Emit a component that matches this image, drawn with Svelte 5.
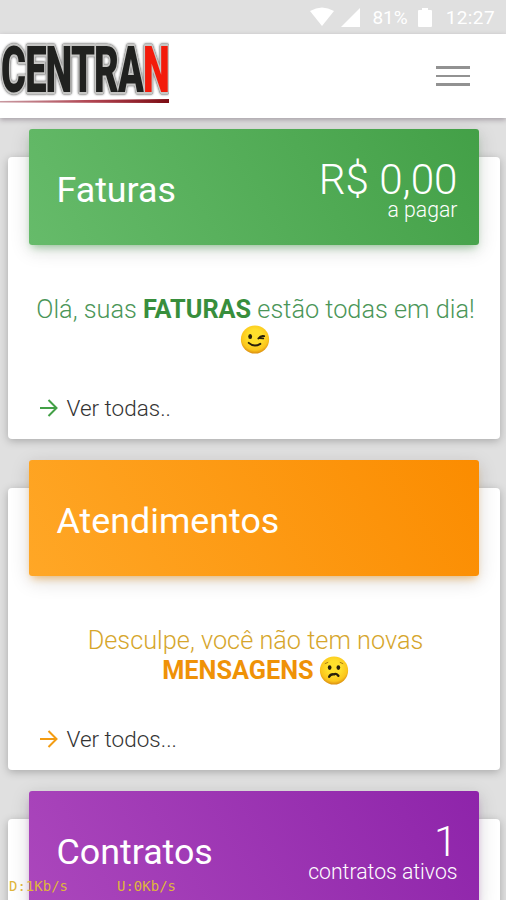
<script>
  const cards = [
    {
      title: 'Faturas',
      color: 'green',
      value: 'R$ 0,00',
      label: 'a pagar',
      before: 'Olá, suas ',
      strong: 'FATURAS',
      after: ' estão todas em dia! ',
      emoji: 'wink',
      link: 'Ver todas..'
    },
    {
      title: 'Atendimentos',
      color: 'orange',
      before: 'Desculpe, você não tem novas ',
      strong: 'MENSAGENS',
      after: ' ',
      emoji: 'sad',
      link: 'Ver todos...'
    },
    {
      title: 'Contratos',
      color: 'purple',
      value: '1',
      label: 'contratos ativos'
    }
  ];
</script>

<div class="screen">
  <div class="status">
    <svg class="wifi" width="26" height="20" viewBox="0 0 26 20"><path d="M1 4Q13-3 25 4L13 19Z" /></svg>
    <svg class="signal" width="19" height="19" viewBox="0 0 19 19"><path d="M0 19L19 0V19Z" /></svg>
    <span class="percent">81%</span>
    <svg class="battery" width="14" height="19" viewBox="0 0 14 19"><path d="M1 2H4V0H10V2H13Q14 2 14 3V18Q14 19 13 19H1Q0 19 0 18V3Q0 2 1 2Z" /></svg>
    <span class="time">12:27</span>
  </div>

  <nav class="navbar">
    <svg class="logo" width="169" height="78" viewBox="0 0 169 78">
      <defs>
        <linearGradient id="line">
          <stop offset="0" stop-color="#c99aa2" />
          <stop offset=".55" stop-color="#b04350" />
          <stop offset="1" stop-color="#7c0c14" />
        </linearGradient>
      </defs>
      <text class="letters" x="1" y="58" textLength="168" lengthAdjust="spacingAndGlyphs">CENTRA<tspan class="red">N</tspan></text>
      <path d="M0 67L169 65V69L0 68.5Z" fill="url(#line)" />
    </svg>
    <button class="toggler" aria-label="Menu">
      <span></span>
      <span></span>
      <span></span>
    </button>
  </nav>

  <main>
    {#each cards as card}
      <div class="card {card.color}">
        <div class="card-header">
          <h2>{card.title}</h2>
          {#if card.value}
            <div class="total">
              <p class="value">{card.value}</p>
              <p class="label">{card.label}</p>
            </div>
          {/if}
        </div>
        {#if card.strong}
          <p class="message">
            {card.before}<strong>{card.strong}</strong>{card.after}<svg class="emoji" viewBox="0 0 30 30">
              <defs>
                <radialGradient id={card.emoji} cx=".5" cy=".4" r=".6">
                  <stop offset=".4" stop-color="#ffe02c" />
                  <stop offset=".8" stop-color="#fbc51c" />
                  <stop offset="1" stop-color="#d98c10" />
                </radialGradient>
              </defs>
              <circle cx="15" cy="15" r="14.6" fill="url(#{card.emoji})" />
              {#if card.emoji == 'wink'}
                <ellipse cx="10" cy="12" rx="2" ry="2.6" fill="#29200c" />
                <path d="M18.500 14Q21 10.500 24.500 11.500M19.500 13.500L23.500 13.800" class="stroke" />
                <path d="M8.500 18.500Q14 23.500 20.500 19.500" class="stroke" />
              {:else}
                <ellipse cx="10.500" cy="12" rx="1.900" ry="2.500" fill="#29200c" />
                <ellipse cx="19.500" cy="12" rx="1.900" ry="2.500" fill="#29200c" />
                <path d="M5.500 8L9 6.500M24.500 8L21 6.500" stroke="#a87610" stroke-width="1" />
                <path d="M10 21.500Q11.500 18.500 15 19Q17 17.500 19.500 20.500" class="stroke frown" />
              {/if}
            </svg>
          </p>
          <a class="more" href="#todos">
            <svg width="18" height="18" viewBox="0 0 18 18"><path d="M0 9H16.500M8.500 1L16.500 9L8.500 17" /></svg>
            <span>{card.link}</span>
          </a>
        {/if}
      </div>
    {/each}
  </main>

  <div class="speed">
    <span>D:1Kb/s</span>
    <span>U:0Kb/s</span>
  </div>
</div>

<style>
  :global(body) {
    background: #e0e0e0;
  }

  .screen {
    position: relative;
    width: 506px;
    height: 900px;
    overflow: hidden;
    background: #e0e0e0;
    font-family: Roboto, sans-serif;
    font-weight: 300;
  }

  h2,
  p {
    margin: 0;
  }

  .status {
    display: flex;
    align-items: center;
    justify-content: flex-end;
    box-sizing: border-box;
    height: 34px;
    padding: 1px 11px 0 0;
    color: #fff;
    font-size: 19px;
    font-weight: 400;
  }

  .status svg {
    fill: #fff;
  }

  .wifi {
    margin-top: -1px;
  }

  .signal {
    margin: 0 12px 0 6px;
  }

  .battery {
    margin: 0 14px 0 10px;
  }

  .time {
    letter-spacing: .4px;
  }

  .navbar {
    position: relative;
    display: flex;
    align-items: flex-start;
    justify-content: space-between;
    height: 84px;
    background: #fff;
    box-shadow: 0 2px 5px rgba(60, 40, 60, .35);
  }

  /* silver letter outline with a darker rim around it */
  .letters {
    fill: #20211f;
    stroke: #c6c6c4;
    stroke-width: 4.500px;
    stroke-linejoin: round;
    paint-order: stroke;
    font-size: 64.500px;
    font-weight: 900;
    letter-spacing: -1.500px;
    filter: drop-shadow(0 0 .6px #777) drop-shadow(0 0 .8px #777);
  }

  .red {
    fill: #f31b0b;
  }

  .toggler {
    display: flex;
    flex-direction: column;
    gap: 6px;
    margin: 32px 36px 0 0;
    padding: 0;
    border: 0;
    background: none;
  }

  .toggler span {
    width: 34px;
    height: 2.500px;
    background: #929292;
  }

  main {
    padding: 38.500px 6.500px 0 7.500px;
  }

  .card {
    display: flow-root;
    box-sizing: border-box;
    height: 282px;
    margin-bottom: 49px;
    border-radius: 4px;
    background: #fff;
    box-shadow: 0 2px 8px rgba(0, 0, 0, .25);
  }

  .card-header {
    display: flex;
    align-items: center;
    justify-content: space-between;
    box-sizing: border-box;
    height: 116px;
    margin: -28px 21px 0;
    padding: 0 21px 0 28px;
    border-radius: 3px;
    color: #fff;
  }

  .green .card-header {
    background: linear-gradient(60deg, #66bb6a, #43a047);
    box-shadow: 0 5px 20px rgba(0, 0, 0, .14), 0 5px 8px -3px rgba(76, 175, 80, .5);
  }

  .orange .card-header {
    background: linear-gradient(60deg, #ffa726, #fb8c00);
    box-shadow: 0 5px 20px rgba(0, 0, 0, .14), 0 5px 8px -3px rgba(255, 152, 0, .5);
  }

  .purple .card-header {
    background: linear-gradient(60deg, #ab47bc, #8e24aa);
    box-shadow: 0 5px 20px rgba(0, 0, 0, .14), 0 5px 8px -3px rgba(156, 39, 176, .5);
  }

  h2 {
    padding-top: 7px;
    font-size: 35.800px;
    font-weight: 400;
  }

  .total {
    padding-top: 8px;
    text-align: right;
  }

  .value {
    font-size: 42.200px;
    line-height: 39px;
  }

  .label {
    font-size: 21.200px;
    line-height: 22px;
  }

  .message {
    height: 60px;
    margin: 50px 8px 0 12px;
    font-size: 25.300px;
    line-height: 30px;
    text-align: center;
  }

  .green .message {
    color: #4b9658;
  }

  .green strong {
    color: #388e3c;
  }

  .orange .message {
    color: #d6a62c;
  }

  .orange strong {
    color: #ef9207;
  }

  strong {
    font-weight: 700;
  }

  .emoji {
    width: 30px;
    height: 29px;
    margin-left: -1px;
    vertical-align: -6px;
  }

  .stroke {
    fill: none;
    stroke: #29200c;
    stroke-width: 2;
    stroke-linecap: round;
  }

  .frown {
    stroke-width: 2.500;
  }

  .more {
    display: flex;
    align-items: center;
    gap: 9px;
    margin: 39px 0 0 32px;
    color: #333;
    font-size: 22.500px;
    line-height: 28px;
    text-decoration: none;
  }

  .more path {
    fill: none;
    stroke: #43a047;
    stroke-width: 2;
  }

  .orange .more path {
    stroke: #f39c12;
  }

  /* network meter drawn above everything else */
  .speed {
    position: absolute;
    left: 9px;
    bottom: 6px;
    display: flex;
    gap: 49px;
    color: #dfb63c;
    font: 400 14px/16px "DejaVu Sans Mono", monospace;
  }
</style>
